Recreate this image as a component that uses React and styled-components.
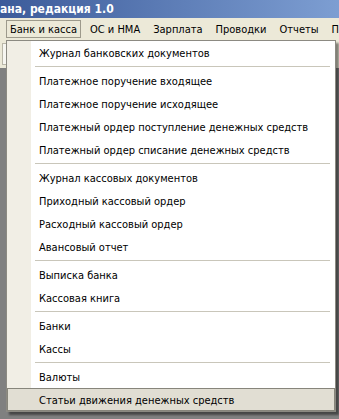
import React from "react";
import styled, { createGlobalStyle } from "styled-components";

const Global = createGlobalStyle`
  html, body {
    margin: 0;
    padding: 0;
    background: #808080;
    overflow: hidden;
  }
  body {
    font-family: "DejaVu Sans Condensed", "DejaVu Sans", "Liberation Sans", sans-serif;
    font-size: 11px;
    color: #000;
  }
`;

const Window = styled.div`
  position: relative;
  width: 339px;
  height: 419px;
  display: flex;
  flex-direction: column;
  background: #808080;
`;

const TitleBar = styled.div`
  height: 18px;
  display: flex;
  align-items: center;
  background: linear-gradient(to right, #3c5b9a, #7d9ed2);
  color: #fff;
  font-weight: bold;
  font-size: 12px;
  white-space: nowrap;
`;

const MenuBar = styled.div`
  height: 22px;
  display: flex;
  align-items: center;
  gap: 2px;
  padding-left: 6px;
  background: #ece9d8;
  white-space: nowrap;
  overflow: hidden;
`;

const MenuTitle = styled.div`
  height: 18px;
  line-height: 17px;
  padding: 0 3px;
  border: 1px solid ${(p) => (p.$active ? "#9d9a8c" : "transparent")};
  box-sizing: border-box;
  margin-right: 3px;
`;

const Toolbar = styled.div`
  height: 28px;
  display: flex;
  align-items: center;
  padding-left: 2px;
  background: #ece9d8;
`;

const Field = styled.div`
  width: 120px;
  height: 20px;
  background: #f7f6f1;
  border: 1px solid #b9b6a8;
`;

const Workspace = styled.div`
  flex: 1;
  background: #808080;
`;

const Dropdown = styled.div`
  position: absolute;
  left: 6px;
  top: 40px;
  width: 330px;
  box-sizing: border-box;
  border: 1px solid #8c8a82;
  background: linear-gradient(to right, #f1eee5 24px, #ffffff 24px);
  box-shadow: 3px 3px 2px rgba(0, 0, 0, 0.45);
`;

const Item = styled.div`
  height: 23px;
  line-height: 21px;
  box-sizing: border-box;
  padding-left: 31px;
  padding-top: 1px;
  border: 1px solid ${(p) => (p.$selected ? "#87857b" : "transparent")};
  background: ${(p) => (p.$selected ? "#e1ded3" : "transparent")};
  white-space: nowrap;
`;

const Separator = styled.div`
  height: 1px;
  margin: 2px 5px 2px 28px;
  background: #c9c6ba;
`;

const menus = ["Банк и касса", "ОС и НМА", "Зарплата", "Проводки", "Отчеты", "Предприятие"];

const entries = [
  "Журнал банковских документов",
  "-",
  "Платежное поручение входящее",
  "Платежное поручение исходящее",
  "Платежный ордер поступление денежных средств",
  "Платежный ордер списание денежных средств",
  "-",
  "Журнал кассовых документов",
  "Приходный кассовый ордер",
  "Расходный кассовый ордер",
  "Авансовый отчет",
  "-",
  "Выписка банка",
  "Кассовая книга",
  "-",
  "Банки",
  "Кассы",
  "-",
  "Валюты",
  "Статьи движения денежных средств",
];

export default function App() {
  return (
    <Window>
      <Global />
      <TitleBar>ана, редакция 1.0</TitleBar>
      <MenuBar>
        {menus.map((m, i) => (
          <MenuTitle key={m} $active={i === 0}>
            {m}
          </MenuTitle>
        ))}
      </MenuBar>
      <Toolbar>
        <Field />
      </Toolbar>
      <Workspace />
      <Dropdown>
        {entries.map((e, i) =>
          e === "-" ? (
            <Separator key={i} />
          ) : (
            <Item key={i} $selected={i === entries.length - 1}>
              {e}
            </Item>
          )
        )}
      </Dropdown>
    </Window>
  );
}
